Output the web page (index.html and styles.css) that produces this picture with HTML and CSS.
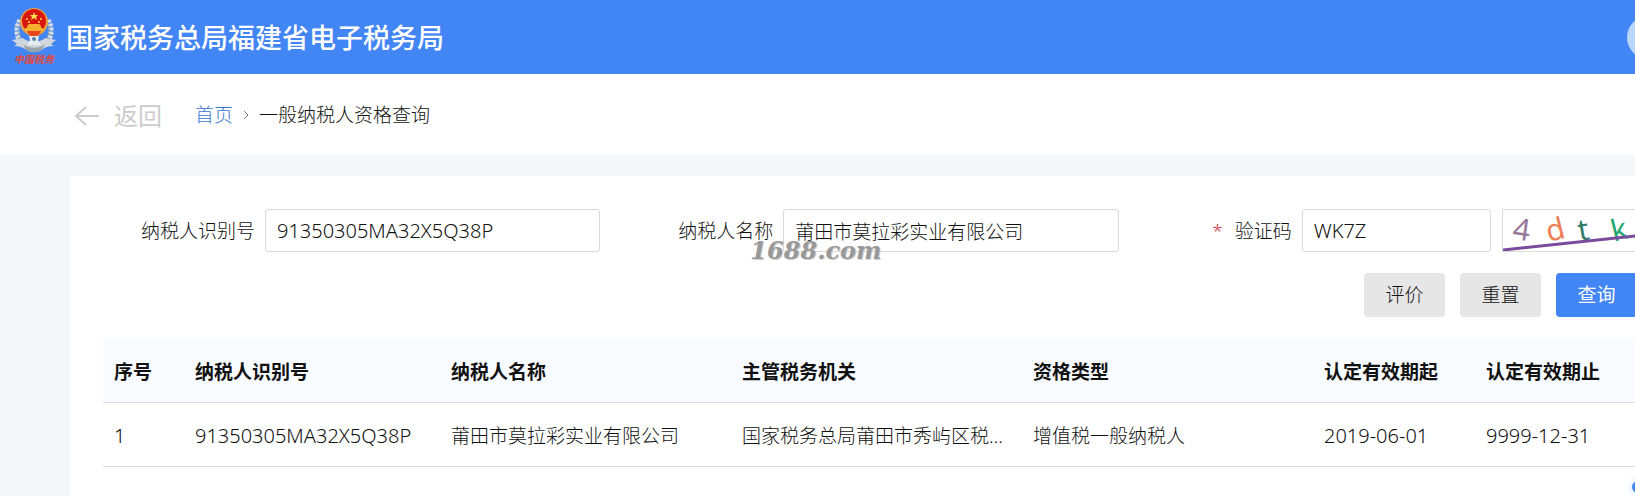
FILE: index.html
```html
<!DOCTYPE html>
<html lang="zh-CN">
<head>
  <meta charset="UTF-8">
  <meta name="viewport" content="width=device-width, initial-scale=1.0">
  <title>一般纳税人资格查询</title>
  <link rel="stylesheet" href="styles.css">
</head>
<body>
  <div class="page">
    <header class="topbar">
      <svg class="emblem" width="44" height="58" viewBox="0 0 44 58" aria-hidden="true">
        <path d="M8 12C3 20 4 31 12 37M36 12c5 8 4 19-4 25" fill="none" stroke="#d9dde0" stroke-width="5" stroke-dasharray="3 1"/>
        <path d="M9 13C5 20 6 29 13 35M35 13c4 7 3 16-4 22" fill="none" stroke="#8c8b83" stroke-width="1" stroke-dasharray="2 2"/>
        <path d="M0 32l11-2c5 5 17 5 22 0l11 2-5 4 3 2c-6 0-8 1-11 3-5 2-13 2-18 0-3-2-6-3-11-3l3-2z" fill="#cfd6dc"/>
        <path d="M11 36c6 5 16 5 22 0l-3 6c-4 3-12 3-16 0z" fill="#9aa4ad"/>
        <path d="M17 27h10l-1 6 3 4H15l3-4z" fill="#e9edf0"/>
        <circle cx="22" cy="14" r="14" fill="#e8a04a"/>
        <circle cx="22" cy="13" r="12" fill="#d8170f"/>
        <path d="M22 4l1 3h3l-2 2 1 3-3-2-3 2 1-3-2-2h3z" fill="#ffe04a"/>
        <circle cx="15" cy="11" r="1" fill="#ffe04a"/>
        <circle cx="29" cy="11" r="1" fill="#ffe04a"/>
        <circle cx="17" cy="14" r="1" fill="#ffe04a"/>
        <circle cx="27" cy="14" r="1" fill="#ffe04a"/>
        <path d="M15 18l2-2h10l2 2v2H15zM13 20h18v3H13z" fill="#f6b02e"/>
        <path d="M15 23h14l-3 5h-8z" fill="#e8451c"/>
        <circle cx="22" cy="31" r="2" fill="#5d7f9d"/>
        <text class="emblem-text" x="22" y="55" text-anchor="middle">中国税务</text>
      </svg>
      <h1>国家税务总局福建省电子税务局</h1>
      <span class="avatar"></span>
    </header>

    <nav class="crumbs">
      <a href="#" class="back">
        <svg width="26" height="22" viewBox="0 0 26 22" aria-hidden="true">
          <path d="M12 2L2 11l10 9M2 11h23" fill="none" stroke="currentColor" stroke-width="2"/>
        </svg>
        返回
      </a>
      <a href="#" class="home">首页</a>
      <svg class="sep" width="6" height="10" viewBox="0 0 6 10" aria-hidden="true">
        <path d="M1 1l4 4-4 4" fill="none" stroke="currentColor"/>
      </svg>
      <span>一般纳税人资格查询</span>
    </nav>

    <main class="panel">
      <form class="search">
        <div class="field">
          <label for="nsrsbh">纳税人识别号</label>
          <input type="text" id="nsrsbh" class="num" value="91350305MA32X5Q38P">
        </div>
        <div class="field">
          <label for="nsrmc">纳税人名称</label>
          <input type="text" id="nsrmc" value="莆田市莫拉彩实业有限公司">
          <span class="watermark">1688.com</span>
        </div>
        <div class="field">
          <label for="yzm"><span class="required">*</span>验证码</label>
          <input type="text" id="yzm" class="num" value="WK7Z">
          <svg class="captcha" width="135" height="43" viewBox="0 0 133 41" role="img" aria-label="验证码图片">
            <text x="10" y="30" fill="#94799c" transform="rotate(8 18 20)">4</text>
            <text x="43" y="30" fill="#ee8058" transform="rotate(-14 52 20)">d</text>
            <text x="75" y="30" fill="#2f7a68" transform="rotate(-10 82 20)">t</text>
            <text x="108" y="30" fill="#1fa872" transform="rotate(-14 116 20)">k</text>
            <path d="M0 40L133 26" stroke="#7a4a9c" stroke-width="3"/>
          </svg>
        </div>
      </form>

      <div class="actions">
        <button type="button">评价</button>
        <button type="button">重置</button>
        <button type="button" class="primary">查询</button>
      </div>

      <table>
        <colgroup>
          <col class="col-no">
          <col class="col-id">
          <col>
          <col>
          <col>
          <col class="col-date">
          <col class="col-date">
        </colgroup>
        <thead>
          <tr>
            <th>序号</th>
            <th>纳税人识别号</th>
            <th>纳税人名称</th>
            <th>主管税务机关</th>
            <th>资格类型</th>
            <th>认定有效期起</th>
            <th>认定有效期止</th>
          </tr>
        </thead>
        <tbody>
          <tr>
            <td class="num">1</td>
            <td class="num">91350305MA32X5Q38P</td>
            <td>莆田市莫拉彩实业有限公司</td>
            <td>国家税务总局莆田市秀屿区税务局</td>
            <td>增值税一般纳税人</td>
            <td class="num">2019-06-01</td>
            <td class="num">9999-12-31</td>
          </tr>
        </tbody>
      </table>
    </main>
  </div>
  <span class="float-dot"></span>
</body>
</html>
```

FILE: styles.css
```css
* {
  box-sizing: border-box;
}

body {
  margin: 0;
  overflow: hidden;
  background-color: #f4f8fb;
  color: #111;
  font-family: "Noto Sans", "Noto Sans CJK SC", sans-serif;
  font-size: 19px;
  font-weight: 300;
  line-height: 28px;
}

.page {
  width: calc(100% + 105px);
  min-height: 100vh;
  display: flex;
  flex-direction: column;
}

.topbar {
  display: flex;
  align-items: center;
  height: 74px;
  padding: 0 70px 0 12px;
  background-color: #4285f5;
  color: #fff;
}

.emblem-text {
  font-size: 10px;
  font-weight: bold;
  font-style: italic;
  fill: #e2483a;
}

h1 {
  margin: 0;
  padding: 2px 0 0 10px;
  font-size: 27px;
  font-weight: 500;
  line-height: 40px;
}

.avatar {
  width: 43px;
  height: 43px;
  margin-left: auto;
  border-radius: 50%;
  background-color: #b9d7fb;
}

.crumbs {
  display: flex;
  align-items: center;
  height: 81px;
  padding: 0 74px;
  background-color: #fff;
}

.crumbs a {
  text-decoration: none;
}

.back {
  display: flex;
  align-items: center;
  gap: 14px;
  margin-right: 33px;
  padding-top: 2px;
  color: #ccc;
  font-size: 24px;
  font-weight: 400;
}

.crumbs .home {
  color: #3a78cf;
}

.sep {
  margin: 0 10px;
  color: #777;
}

.panel {
  flex: 1;
  margin: 21px 70px 0;
  padding: 33px;
  background-color: #fff;
}

.search {
  display: grid;
  grid-template-columns: repeat(3, minmax(0, 1fr));
  gap: 21px;
}

.field {
  position: relative;
  display: flex;
  align-items: center;
}

.field label {
  flex: none;
  width: 152px;
  margin-right: 10px;
  text-align: right;
}

.field input {
  flex: 1;
  min-width: 0;
  height: 43px;
  padding: 0 11px;
  border: 1px solid #d9d9d9;
  border-radius: 3px;
  background-color: #fff;
  color: #111;
  font: inherit;
}

.field .num,
td.num {
  font-size: 20px;
}

.required {
  margin-right: 12px;
  color: #d9363e;
}

.watermark {
  position: absolute;
  left: 129px;
  bottom: -13px;
  color: #999;
  font-family: "DejaVu Serif", serif;
  font-size: 24px;
  font-style: italic;
  font-weight: bold;
  text-shadow: 1px 1px 1px #ccc;
}

.captcha {
  flex: none;
  margin-left: 11px;
  border: 1px solid #d9d9d9;
}

.captcha text {
  font-family: "Noto Sans", sans-serif;
  font-size: 30px;
  font-weight: 400;
}

.actions {
  display: flex;
  justify-content: flex-end;
  gap: 15px;
  margin: 21px 0;
}

button {
  width: 81px;
  height: 44px;
  padding: 0;
  border: none;
  border-radius: 4px;
  background-color: #e6e6e6;
  color: #111;
  font: inherit;
  cursor: pointer;
}

button.primary {
  background-color: #4285f5;
  color: #fff;
  font-weight: 400;
}

table {
  width: 100%;
  table-layout: fixed;
  border-collapse: collapse;
}

.col-no {
  width: 81px;
}

.col-id {
  width: 256px;
}

.col-date {
  width: 162px;
}

th, td {
  height: 64px;
  padding: 4px 11px 0;
  border-bottom: 1px solid #d9d9d9;
  overflow: hidden;
  text-align: left;
  text-overflow: ellipsis;
  white-space: nowrap;
}

th {
  background-color: #f8fbff;
  font-weight: bold;
}

.float-dot {
  position: fixed;
  right: -9px;
  bottom: 3px;
  width: 12px;
  height: 12px;
  border-radius: 50%;
  background-color: #4285f5;
  box-shadow: 0 0 8px #c5dcfb;
}
```
